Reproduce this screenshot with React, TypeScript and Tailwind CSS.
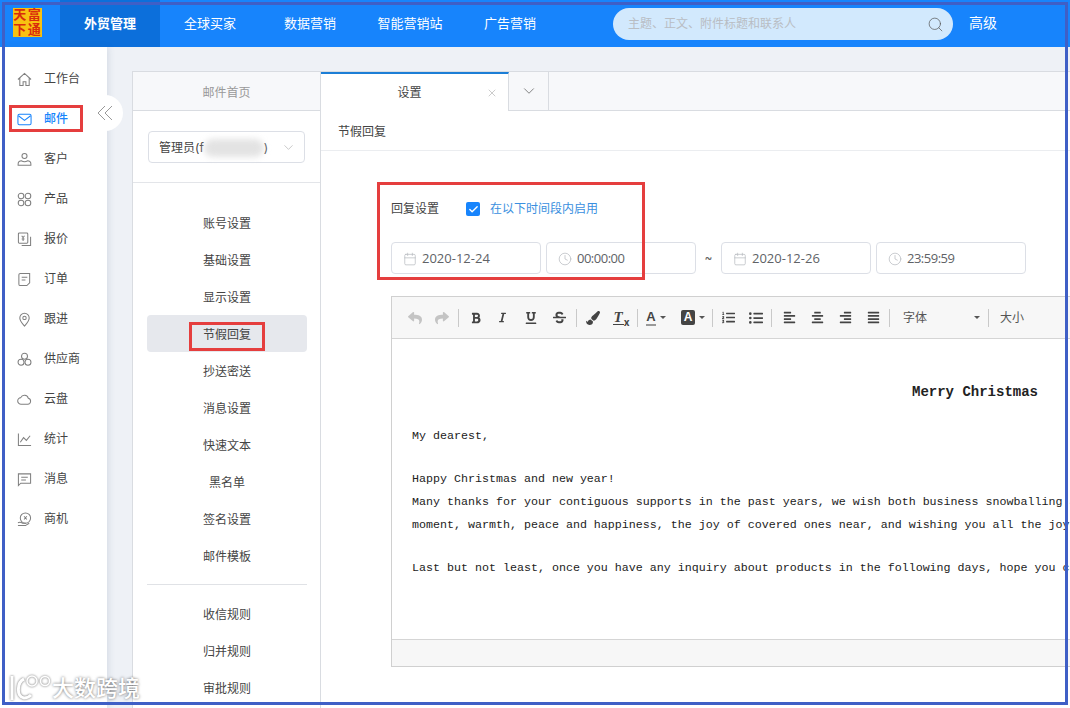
import { ChevronDown, X, Search, Calendar, Clock, Check } from "lucide-react";
import {
  FaReply,
  FaShare,
  FaBold,
  FaItalic,
  FaUnderline,
  FaStrikethrough,
  FaPaintBrush,
  FaListOl,
  FaListUl,
  FaAlignLeft,
  FaAlignCenter,
  FaAlignRight,
  FaAlignJustify,
} from "react-icons/fa";
import type { ReactNode } from "react";

const cjk = "font-['Inter','Noto_Sans_CJK_SC',sans-serif]";

const sideIcons: Record<string, ReactNode> = {
  home: <path d="M1 8 8 1.500 15 8M3 6.500v8h3.500v-4h3v4H13v-8" />,
  mail: (
    <>
      <rect x="1" y="2.500" width="14" height="11" rx="1.500" />
      <path d="M1.500 4 8 9l6.500-5" />
    </>
  ),
  user: (
    <>
      <circle cx="8" cy="4.200" r="2.700" />
      <path d="M1.200 14.200v-1.400c0-2 1.800-3.400 3.800-3.400 1.500 1.200 4.500 1.200 6 0 2 0 3.800 1.400 3.800 3.400v1.400z" />
    </>
  ),
  product: (
    <>
      <circle cx="4.300" cy="4.300" r="3" />
      <circle cx="11.700" cy="4.300" r="3" />
      <circle cx="4.300" cy="11.700" r="3" />
      <circle cx="11.700" cy="11.700" r="3" />
    </>
  ),
  quote: (
    <>
      <rect x="1.500" y="1" width="10" height="11" rx="1" />
      <path d="M14.500 5v9.500H5M5 4l1.500 2L8 4M6.500 6v3.500M5 7.500h3" />
    </>
  ),
  order: (
    <>
      <path d="M3.500 1.500h10v10l-3 3h-7a1.500 1.500 0 0 1-1.500-1.500V3a1.500 1.500 0 0 1 1.500-1.500z" />
      <path d="M5 5.500h6M5 8.500h4" />
    </>
  ),
  pin: (
    <>
      <path d="M8 15C5.500 12 3 9.500 3 6.300a5 5 0 0 1 10 0C13 9.500 10.500 12 8 15z" />
      <circle cx="8" cy="6.300" r="1.800" />
    </>
  ),
  supplier: (
    <>
      <circle cx="8" cy="4.500" r="3.200" />
      <circle cx="4.300" cy="11" r="3.200" />
      <circle cx="11.700" cy="11" r="3.200" />
    </>
  ),
  cloud: <path d="M4.500 13h7a3.200 3.200 0 0 0 .6-6.300A4.300 4.300 0 0 0 4 6a3.500 3.500 0 0 0 .5 7z" />,
  chart: <path d="M1.500 1.500v13h13.500M3.500 11 7 6l3 3 4-5" />,
  message: <path d="M1.500 2h13v10H4l-2.500 2.500zM4.500 5.500h7M4.500 8.500h5" />,
  deal: (
    <>
      <circle cx="9" cy="6.500" r="5.500" />
      <path d="M1 11.500c2-1 3.500-.5 5 .5h3.500M1 14.500h8l4-2.500M7.500 4.500 10.500 8M10.500 4.500 7.500 8" />
    </>
  ),
};

const sideItems = [
  ["home", "工作台"],
  ["mail", "邮件"],
  ["user", "客户"],
  ["product", "产品"],
  ["quote", "报价"],
  ["order", "订单"],
  ["pin", "跟进"],
  ["supplier", "供应商"],
  ["cloud", "云盘"],
  ["chart", "统计"],
  ["message", "消息"],
  ["deal", "商机"],
];

const menuTop = ["账号设置", "基础设置", "显示设置", "节假回复", "抄送密送", "消息设置", "快速文本", "黑名单", "签名设置", "邮件模板"];
const menuBottom = ["收信规则", "归并规则", "审批规则"];

const Sep = () => <span className="w-px h-[18px] bg-[#c9c9c9]" />;

const Tool = ({ w, children }: { w: string; children: ReactNode }) => (
  <span className={`${w} flex items-center justify-center text-[13px] text-[#444]`}>{children}</span>
);

const Caret = () => <span className="ml-[4px] border-x-[3px] border-t-[3px] border-x-transparent border-t-[#555]" />;

const Field = ({ icon, value, width }: { icon: "date" | "time"; value: string; width: string }) => (
  <div className={`${width} h-[32px] pt-[1px] border border-[#dcdfe6] rounded-[4px] flex items-center pl-[11px] text-[13px] text-[#606266] font-['Open_Sans',sans-serif]`}>
    {icon === "date" ? (
      <Calendar size={14} strokeWidth={1.200} className="text-[#b4b7bd]" />
    ) : (
      <Clock size={14} strokeWidth={1.200} className="text-[#b4b7bd]" />
    )}
    <span className={icon === "date" ? "ml-[5px]" : "ml-[5px] tracking-[-0.5px]"}>{value}</span>
  </div>
);

export default function App() {
  return (
    <div className={`relative w-[1070px] h-[708px] overflow-hidden bg-white text-xs text-[#444] ${cjk}`}>
      <header className="h-[47px] bg-[#1784fc] flex items-stretch text-white">
        <div className="w-[60px] flex items-center justify-center pb-[2px]">
          <div className="w-[29px] h-[29px] ml-[-6px] bg-[#f8c111] grid grid-cols-2 text-[13px] leading-[14px] font-semibold text-[#d92c0c] text-center font-['Liberation_Serif','Noto_Sans_CJK_SC',serif]">
            <span>天</span>
            <span>富</span>
            <span>下</span>
            <span>通</span>
          </div>
        </div>
        <nav className="flex text-[13px]">
          <a className="w-[100px] flex items-center justify-center bg-[#0c6fdb] font-semibold">外贸管理</a>
          <a className="w-[100px] flex items-center justify-center">全球买家</a>
          <a className="w-[100px] flex items-center justify-center">数据营销</a>
          <a className="w-[100px] flex items-center justify-center">智能营销站</a>
          <a className="w-[100px] flex items-center justify-center">广告营销</a>
        </nav>
        <div className="ml-[53px] mt-[8px] w-[340px] h-[32px] bg-[#d2e9fd] rounded-full flex items-center pl-[15px] pr-[9px] text-[#b9bdc3]">
          <span className="flex-1">主题、正文、附件标题和联系人</span>
          <Search size={17} strokeWidth={1} className="text-[#555]" />
        </div>
        <span className="ml-[16px] flex items-center text-[14px]">高级</span>
      </header>

      <div className="flex h-[661px]">
        <aside className="relative w-[107px] shrink-0 bg-white pt-[12px] shadow-[2px_0_6px_rgba(60,80,120,0.12)] z-10">
          {sideItems.map(([icon, label]) => {
            const active = icon === "mail";
            return (
              <div key={icon} className={`h-[40px] flex items-center pl-[17px] ${active ? "text-[#1784fc] font-medium" : ""}`}>
                <svg
                  width="15"
                  height="15"
                  viewBox="0 0 16 16"
                  fill="none"
                  strokeWidth="1.100"
                  stroke={active ? "#1784fc" : "#808080"}
                >
                  {sideIcons[icon]}
                </svg>
                <span className="ml-[12px]">{label}</span>
              </div>
            );
          })}
          <div className="absolute left-[87px] top-[48px] w-[36px] h-[36px] rounded-full bg-white flex items-center justify-center">
            <svg width="16" height="16" viewBox="0 0 16 16" fill="none" stroke="#999" strokeWidth="1">
              <path d="M8 1 1 8l7 7M15 1 8 8l7 7" />
            </svg>
          </div>
        </aside>

        <main className="flex-1 min-w-0 bg-[#eef1f6] pl-[25px] pt-[24px]">
          <div className="h-full flex bg-white border-l border-t border-[#d9dce1]">
            <div className="w-[188px] shrink-0 border-r border-[#d9dce1]">
              <div className="h-[39px] pt-[3px] bg-[#f7f8fa] border-b border-[#d9dce1] flex items-center justify-center text-[#999]">邮件首页</div>
              <div className="h-[72px] border-b border-[#e3e5e9] pt-[20px] px-[15px]">
                <div className="h-[32px] w-[157px] pt-[1px] border border-[#dcdfe6] rounded-[4px] flex items-center pl-[10px] pr-[8px]">
                  <span>管理员(f</span>
                  <span className="w-[60px] h-[18px] bg-[#e3e3e3] rounded-full blur-[3px]" />
                  <span>)</span>
                  <ChevronDown size={15} strokeWidth={1} className="ml-auto text-[#aaa]" />
                </div>
              </div>
              <div className="pl-[14px] pr-[13px] pt-[21px]">
                {menuTop.map((m) => (
                  <div key={m} className={`h-[37px] pt-[2px] flex items-center justify-center rounded-[4px] ${m === "节假回复" ? "bg-[#e6e8ed]" : ""}`}>
                    {m}
                  </div>
                ))}
                <div className="mt-[10px] mb-[11px] border-t border-[#e0e2e6]" />
                {menuBottom.map((m) => (
                  <div key={m} className="h-[37px] flex items-center justify-center">
                    {m}
                  </div>
                ))}
              </div>
            </div>

            <div className="flex-1 min-w-0 overflow-hidden">
              <div className="relative h-[39px] bg-[#f7f8fa] border-b border-[#d9dce1] flex">
                <div className="w-[188px] h-[39px] bg-white border-t-2 border-[#1c7ed6] border-r border-r-[#d9dce1] flex items-center justify-center">
                  <span className="mr-[10px]">设置</span>
                  <X size={12} strokeWidth={1} className="absolute left-[165px] text-[#999]" />
                </div>
                <div className="w-[40px] border-r border-[#d9dce1] flex items-center justify-center">
                  <ChevronDown size={18} strokeWidth={1.200} className="text-[#777]" />
                </div>
              </div>
              <div className="h-[40px] pt-[2px] border-b border-[#ebedf0] flex items-center pl-[17px]">节假回复</div>

              <div className="pl-[70px] pt-[49px]">
                <div className="flex items-center h-[18px]">
                  <span>回复设置</span>
                  <span className="ml-[27px] w-[14px] h-[14px] rounded-[2px] bg-[#1784fc] flex items-center justify-center">
                    <Check size={11} strokeWidth={3} className="text-white" />
                  </span>
                  <span className="ml-[10px] text-[#3a8fe0]">在以下时间段内启用</span>
                </div>
                <div className="flex items-center gap-[5px] mt-[24px]">
                  <Field icon="date" value="2020-12-24" width="w-[150px]" />
                  <Field icon="time" value="00:00:00" width="w-[150px]" />
                  <span className="w-[15px] text-center text-[#666]">~</span>
                  <Field icon="date" value="2020-12-26" width="w-[150px]" />
                  <Field icon="time" value="23:59:59" width="w-[150px]" />
                </div>

                <div className="mt-[22px] w-[1168px] border border-[#d0d0d0]">
                  <div className="h-[42px] bg-[#f7f7f7] border-b border-[#d5d5d5] flex items-center pl-[9px]">
                    <Tool w="w-[27px] text-[#c4c4c4]"><FaReply size={14} /></Tool>
                    <Tool w="w-[27px] text-[#c4c4c4]"><FaShare size={14} /></Tool>
                    <span className="w-[3px]" />
                    <Sep />
                    <Tool w="w-[33px]"><FaBold size={12} /></Tool>
                    <Tool w="w-[21px]"><FaItalic size={11} /></Tool>
                    <Tool w="w-[35px]"><FaUnderline size={12} /></Tool>
                    <Tool w="w-[22px]"><FaStrikethrough size={13} /></Tool>
                    <span className="w-[6px]" />
                    <Sep />
                    <Tool w="w-[31px]"><FaPaintBrush size={14} /></Tool>
                    <Tool w="w-[26px]">
                      <span className="relative font-['Liberation_Serif',serif] italic font-bold text-[15px] leading-[14px] border-b border-[#444] px-[1px]">T</span>
                      <span className="text-[10px] leading-none font-bold mt-[8px]">x</span>
                    </Tool>
                    <span className="w-[3px]" />
                    <Sep />
                    <Tool w="w-[36px]">
                      <span className="font-['Liberation_Sans',sans-serif] font-bold text-[13px] leading-[14px] border-b-2 border-[#999]">A</span>
                      <Caret />
                    </Tool>
                    <span className="w-[3px]" />
                    <Tool w="w-[32px]">
                      <span className="w-[14px] h-[15px] bg-[#444] rounded-[2px] text-white font-['Liberation_Sans',sans-serif] font-bold text-[12px] leading-[15px] text-center">A</span>
                      <Caret />
                    </Tool>
                    <span className="w-[3px]" />
                    <Sep />
                    <Tool w="w-[31px]"><FaListOl size={13} /></Tool>
                    <Tool w="w-[23px]"><FaListUl size={14} /></Tool>
                    <span className="w-[4px]" />
                    <Sep />
                    <span className="w-[3px]" />
                    <Tool w="w-[28px]"><FaAlignLeft size={13} /></Tool>
                    <Tool w="w-[28px]"><FaAlignCenter size={13} /></Tool>
                    <Tool w="w-[28px]"><FaAlignRight size={13} /></Tool>
                    <Tool w="w-[28px]"><FaAlignJustify size={13} /></Tool>
                    <span className="w-[2px]" />
                    <Sep />
                    <span className="w-[98px] pl-[13px] flex items-center justify-between pr-[8px] text-[#555]">
                      字体
                      <Caret />
                    </span>
                    <Sep />
                    <span className="pl-[11px] text-[#555]">大小</span>
                  </div>
                  <div className="h-[300px] pt-[42px] px-[20px] whitespace-nowrap text-[#222] text-[11.67px] leading-[23px] font-['Liberation_Mono',monospace]">
                    <p className="text-center text-[14px] font-bold">Merry Christmas</p>
                    <p className="mt-[21px]">My dearest,</p>
                    <p className="mt-[20px]">Happy Christmas and new year!</p>
                    <p>Many thanks for your contiguous supports in the past years, we wish both business snowballing and</p>
                    <p>moment, warmth, peace and happiness, the joy of covered ones near, and wishing you all the joy</p>
                    <p className="mt-[20px]">Last but not least, once you have any inquiry about products in the following days, hope you can</p>
                  </div>
                  <div className="h-[27px] bg-[#f7f7f7] border-t border-[#d5d5d5]" />
                </div>
              </div>
            </div>
          </div>
        </main>
      </div>

      {/* annotations drawn on top of the screenshot */}
      <div className="absolute left-[9px] top-[105px] w-[74px] h-[27px] border-[3px] border-[#e53e3e] z-20" />
      <div className="absolute left-[189px] top-[322px] w-[76px] h-[29px] border-[3px] border-[#e53e3e] z-20" />
      <div className="absolute left-[377px] top-[182px] w-[268px] h-[98px] border-[3px] border-[#e53e3e] z-20" />
      <div className="absolute left-[2px] top-[2px] w-[1066px] h-[703px] border-[3px] border-[#3f5fc6] z-30 pointer-events-none" />

      {/* watermark */}
      <div className="absolute left-[9px] top-[673px] z-20 flex items-center">
        <svg width="42" height="30" viewBox="0 0 42 30" fill="none" stroke="#fff" strokeWidth="3" className="drop-shadow-[0_0_1px_rgba(0,0,0,0.6)]">
          <path d="M3 3v24M15 6C8 9 7 24 15 25c3 0 5-1 7-3" />
          <circle cx="23" cy="8" r="5" strokeWidth="1.500" />
          <circle cx="36" cy="8" r="4.500" strokeWidth="1.500" />
        </svg>
        <span className="ml-[1px] text-[22px] leading-[26px] font-medium text-white [text-shadow:0_0_3px_rgba(0,0,0,0.6)]">大数跨境</span>
      </div>
    </div>
  );
}
